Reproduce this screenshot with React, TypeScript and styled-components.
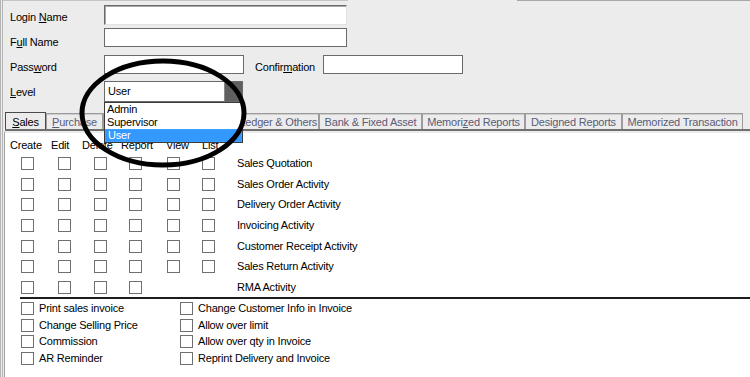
import { createGlobalStyle, styled } from "styled-components";

const GlobalStyle = createGlobalStyle`
  html, body {
    margin: 0;
    padding: 0;
    background: #ececec;
  }
  body {
    font-family: "Liberation Sans", Arial, sans-serif;
    font-size: 11px;
    letter-spacing: -0.2px;
    color: #000;
  }
`;

const Screen = styled.div`
  position: relative;
  width: 750px;
  height: 377px;
  overflow: hidden;
  box-sizing: border-box;
  border-left: 3px double #b4b4b4;
  background: #ececec;
  display: flex;
  flex-direction: column;
`;

const TopEdge = styled.div`
  display: flex;
  height: 1px;
`;

const EdgePart = styled.div<{ $w?: number; $gap?: number; $color: string }>`
  width: ${({ $w }) => ($w ? `${$w}px` : "auto")};
  flex: ${({ $w }) => ($w ? "none" : "1")};
  margin-left: ${({ $gap }) => $gap || 0}px;
  background: ${({ $color }) => $color};
`;

const Form = styled.div`
  padding: 2px 0 0 7px;
`;

const Row = styled.div`
  display: flex;
  align-items: flex-start;
  height: 25px;
`;

const Label = styled.label<{ $w?: number; $ml?: number }>`
  width: ${({ $w }) => $w || 94}px;
  margin-left: ${({ $ml }) => $ml || 0}px;
  margin-top: 8px;
  line-height: 13px;
  white-space: nowrap;
`;

const Field = styled.div<{ $w: number; $h: number; $mt: number; $sunken?: boolean }>`
  box-sizing: border-box;
  width: ${({ $w }) => $w}px;
  height: ${({ $h }) => $h}px;
  margin-top: ${({ $mt }) => $mt}px;
  background: #fff;
  border: 1px solid #6a6a6a;
  ${({ $sunken }) =>
    $sunken &&
    `
    border-color: #6a6a6a #e2e2e2 #e2e2e2 #6a6a6a;
    box-shadow: inset 1px 1px 0 #a8a8a8;
  `}
`;

const ComboWrap = styled.div`
  position: relative;
  width: 139px;
  height: 21px;
  margin-top: 3px;
`;

const ComboBox = styled.div`
  box-sizing: border-box;
  height: 100%;
  display: flex;
  background: #fff;
  border: 1px solid #6a6a6a;
`;

const ComboText = styled.div`
  flex: 1;
  padding-left: 3px;
  line-height: 18px;
`;

const ComboButton = styled.div`
  width: 17px;
  background: #606060;
  border-left: 1px solid #8a8a8a;
`;

const DropList = styled.ul`
  position: absolute;
  top: 21px;
  left: 0;
  z-index: 5;
  box-sizing: border-box;
  width: 139px;
  margin: 0;
  padding: 0;
  list-style: none;
  background: #fff;
  border: 1px solid #3a3a3a;
`;

const DropItem = styled.li<{ $active?: boolean }>`
  height: 13px;
  line-height: 13px;
  padding-left: ${({ $active }) => ($active ? 3 : 2)}px;
  background: ${({ $active }) => ($active ? "#3399ff" : "transparent")};
  color: ${({ $active }) => ($active ? "#fff" : "#000")};
  outline: ${({ $active }) => ($active ? "1px dotted #d88a30" : "none")};
  outline-offset: -1px;
`;

const TabStrip = styled.div`
  display: flex;
  align-items: flex-end;
  height: 17px;
  margin: 9px 0 0 2px;
  border-bottom: 2px solid #707070;
`;

const Tab = styled.div<{ $w: number; $active?: boolean }>`
  box-sizing: border-box;
  flex: none;
  width: ${({ $w }) => $w}px;
  height: ${({ $active }) => ($active ? 17 : 16)}px;
  padding-top: ${({ $active }) => ($active ? 3 : 2)}px;
  line-height: 13px;
  text-align: center;
  white-space: nowrap;
  overflow: hidden;
  border: 1px solid ${({ $active }) => ($active ? "#4a4a4a" : "#9c9c9c")};
  border-bottom: none;
  box-shadow: ${({ $active }) => ($active ? "none" : "inset 0 1px 0 #cdcdcd")};
  color: ${({ $active }) => ($active ? "#000" : "#5b5b78")};
  background: #ececec;
`;

const Panel = styled.div`
  flex: 1;
  margin-left: 1px;
  background: #fff;
  border-top: 2px solid #ececec;
  border-left: 1px solid #a0a0a0;
`;

const HeaderRow = styled.div`
  display: grid;
  grid-template-columns: 41px 31px 39px 45px 36px auto;
  padding-left: 5px;
  margin-top: 6px;
  line-height: 13px;
`;

const CheckGrid = styled.div`
  display: grid;
  grid-template-columns: 37px 36px 35px 38px 35px 35px auto;
  grid-auto-rows: 13px;
  row-gap: 7.67px;
  align-items: center;
  margin-top: 5px;
  padding-left: 16px;
`;

const Box = styled.span`
  display: block;
  box-sizing: border-box;
  width: 13px;
  height: 13px;
  background: #fff;
  border: 1px solid #707070;
`;

const RowLabel = styled.span`
  line-height: 13px;
  white-space: nowrap;
`;

const Separator = styled.div`
  margin: 3px 0 0 15px;
  border-top: 2px solid #1c1c1c;
`;

const Options = styled.div`
  display: grid;
  grid-template-columns: 159px auto;
  grid-auto-rows: 13px;
  row-gap: 3.67px;
  margin-top: 3px;
  padding-left: 16px;
`;

const Option = styled.div`
  display: flex;
  align-items: center;
  gap: 5px;
  line-height: 13px;
  white-space: nowrap;
`;

const Annotation = styled.svg`
  position: absolute;
  left: 74px;
  top: 57px;
  z-index: 10;
  pointer-events: none;
`;

// the two tabs between Purchase and General Ledger sit fully under the open list
const tabs = [
  { w: 41, label: <><u>S</u>ales</>, active: true },
  { w: 57, label: <><u>P</u>urchase</> },
  { w: 45, label: "" },
  { w: 49, label: "" },
  { w: 122, label: "General Ledger & Others" },
  { w: 103, label: "Bank & Fixed Asset" },
  { w: 103, label: <>Memori<u>z</u>ed Reports</> },
  { w: 97, label: "Designed Reports" },
  { w: 121, label: "Memorized Transaction" },
];

const activities = [
  { name: "Sales Quotation", boxes: 6 },
  { name: "Sales Order Activity", boxes: 6 },
  { name: "Delivery Order Activity", boxes: 6 },
  { name: "Invoicing Activity", boxes: 6 },
  { name: "Customer Receipt Activity", boxes: 6 },
  { name: "Sales Return Activity", boxes: 6 },
  { name: "RMA Activity", boxes: 4 },
];

const options = [
  "Print sales invoice",
  "Change Customer Info in Invoice",
  "Change Selling Price",
  "Allow over limit",
  "Commission",
  "Allow over qty in Invoice",
  "AR Reminder",
  "Reprint Delivery and Invoice",
];

export default function App() {
  return (
    <>
      <GlobalStyle />
      <Screen>
        <TopEdge>
          <EdgePart $w={345} $color="#c4c4c4" />
          <EdgePart $gap={169} $color="#a8a8a8" />
        </TopEdge>
        <Form>
          <Row>
            <Label>
              Login <u>N</u>ame
            </Label>
            <Field $w={243} $h={20} $mt={2} $sunken />
          </Row>
          <Row>
            <Label>
              F<u>u</u>ll Name
            </Label>
            <Field $w={243} $h={19} $mt={0} />
          </Row>
          <Row>
            <Label>
              Pass<u>w</u>ord
            </Label>
            <Field $w={140} $h={19} $mt={2} />
            <Label $w={68} $ml={11}>
              Confir<u>m</u>ation
            </Label>
            <Field $w={140} $h={19} $mt={2} />
          </Row>
          <Row>
            <Label>
              <u>L</u>evel
            </Label>
            <ComboWrap>
              <ComboBox>
                <ComboText>User</ComboText>
                <ComboButton />
              </ComboBox>
              <DropList>
                <DropItem>Admin</DropItem>
                <DropItem>Supervisor</DropItem>
                <DropItem $active>User</DropItem>
              </DropList>
            </ComboWrap>
          </Row>
        </Form>

        <TabStrip>
          {tabs.map((t, i) => (
            <Tab key={i} $w={t.w} $active={t.active}>
              {t.label}
            </Tab>
          ))}
        </TabStrip>

        <Panel>
          <HeaderRow>
            <span>Create</span>
            <span>Edit</span>
            <span>Delete</span>
            <span>Report</span>
            <span>View</span>
            <span>List</span>
          </HeaderRow>
          <CheckGrid>
            {activities.map((a) => (
              <>
                {Array.from({ length: 6 }).map((_, i) =>
                  i < a.boxes ? <Box key={a.name + i} /> : <span key={a.name + i} />
                )}
                <RowLabel key={a.name}>{a.name}</RowLabel>
              </>
            ))}
          </CheckGrid>
          <Separator />
          <Options>
            {options.map((o) => (
              <Option key={o}>
                <Box />
                {o}
              </Option>
            ))}
          </Options>
        </Panel>

        <Annotation width={174} height={114} viewBox="0 0 174 114">
          <ellipse cx={86} cy={56} rx={81} ry={52} fill="none" stroke="#000" strokeWidth={5} />
        </Annotation>
      </Screen>
    </>
  );
}
